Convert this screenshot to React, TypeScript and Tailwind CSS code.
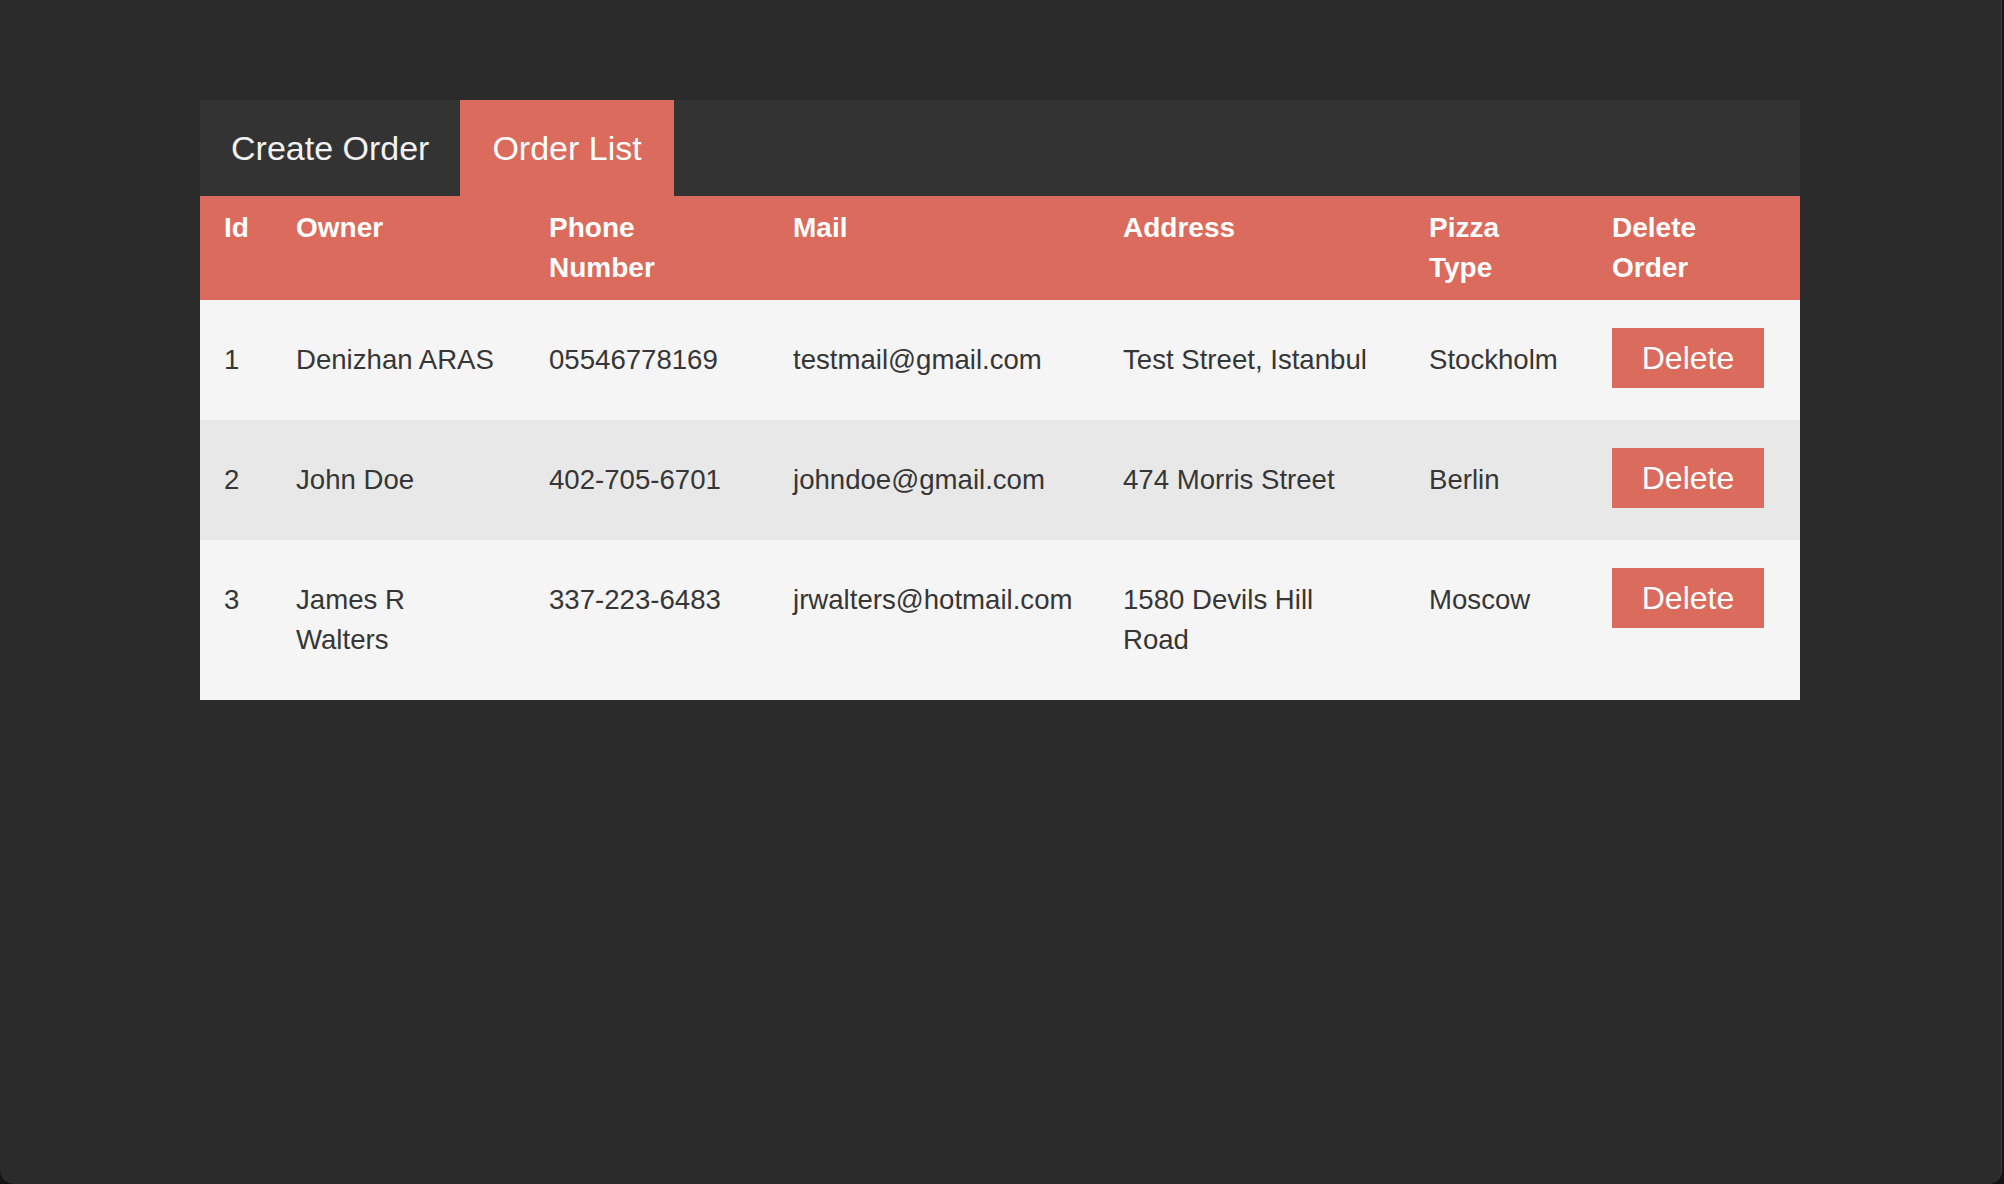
import React from "react";

type Order = {
  id: number;
  owner: string;
  phone: string;
  mail: string;
  address: string;
  pizza: string;
};

const orders: Order[] = [
  { id: 1, owner: "Denizhan ARAS", phone: "05546778169", mail: "testmail@gmail.com", address: "Test Street, Istanbul", pizza: "Stockholm" },
  { id: 2, owner: "John Doe", phone: "402-705-6701", mail: "johndoe@gmail.com", address: "474 Morris Street", pizza: "Berlin" },
  { id: 3, owner: "James R Walters", phone: "337-223-6483", mail: "jrwalters@hotmail.com", address: "1580 Devils Hill Road", pizza: "Moscow" },
];

export default function App() {
  return (
    <div className="w-[2004px] h-[1184px] bg-[#141414] font-['Liberation_Sans',Arial,sans-serif]">
      <div className="w-[2002px] h-full bg-[#2b2b2b] rounded-b-[14px] border-r border-[#3d3d3d] pt-[100px] pl-[200px]">
        <div className="w-[1600px]">
          <div className="flex h-[96px] bg-[#333333]">
            <div className="flex items-center px-[31px] text-[34px] text-[#f2f2f2]">Create Order</div>
            <div className="flex items-center px-[32px] text-[34px] text-white bg-[#db6b5c]">Order List</div>
          </div>
          <table className="table-fixed border-collapse w-[1600px] text-left">
            <colgroup>
              <col className="w-[72px]" />
              <col className="w-[253px]" />
              <col className="w-[244px]" />
              <col className="w-[330px]" />
              <col className="w-[306px]" />
              <col className="w-[183px]" />
              <col className="w-[212px]" />
            </colgroup>
            <thead>
              <tr className="bg-[#db6b5c] text-white text-[28px] font-bold leading-[40px] align-top">
                <th className="pl-6 pr-2 py-3 font-bold">Id</th>
                <th className="pl-6 pr-7 py-3 font-bold">Owner</th>
                <th className="pl-6 pr-7 py-3 font-bold"><span className="block">Phone</span><span className="block">Number</span></th>
                <th className="pl-6 pr-7 py-3 font-bold">Mail</th>
                <th className="pl-6 pr-7 py-3 font-bold">Address</th>
                <th className="pl-6 pr-7 py-3 font-bold"><span className="block">Pizza</span><span className="block">Type</span></th>
                <th className="pl-6 pr-4 py-3 font-bold"><span className="block">Delete</span><span className="block">Order</span></th>
              </tr>
            </thead>
            <tbody className="text-[27.6px] leading-[40px] text-[#363636]">
              {orders.map((o) => (
                <tr key={o.id} className={`align-top ${o.id % 2 === 0 ? "bg-[#e8e8e8]" : "bg-[#f5f5f5]"}`}>
                  <td className="pl-6 pr-2 py-10">{o.id}</td>
                  <td className="pl-6 pr-7 py-10">{o.owner}</td>
                  <td className="pl-6 pr-7 py-10 whitespace-nowrap">{o.phone}</td>
                  <td className="pl-6 pr-7 py-10 whitespace-nowrap">{o.mail}</td>
                  <td className="pl-6 pr-7 py-10">{o.address}</td>
                  <td className="pl-6 pr-7 py-10 whitespace-nowrap">{o.pizza}</td>
                  <td className="pl-6 pr-4 pt-[28px] pb-0">
                    <button className="w-[152px] h-[60px] bg-[#db6b5c] text-white text-[32px] leading-[60px] text-center">
                      Delete
                    </button>
                  </td>
                </tr>
              ))}
            </tbody>
          </table>
        </div>
      </div>
    </div>
  );
}
